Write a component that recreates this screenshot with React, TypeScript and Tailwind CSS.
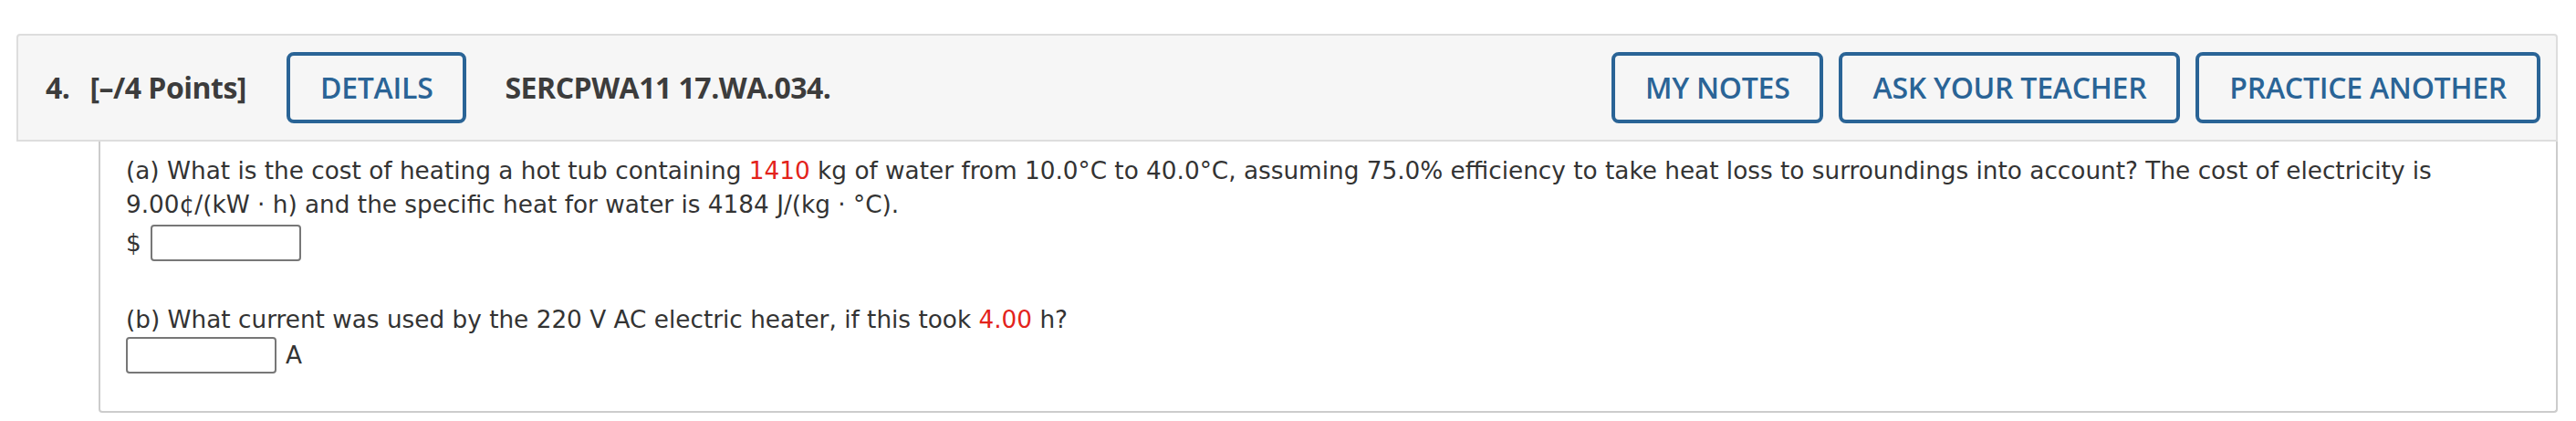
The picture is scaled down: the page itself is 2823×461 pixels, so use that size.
const Btn = ({ label }: { label: string }) => (
  <button className="h-[78px] px-[33px] border-4 border-[#2a6496] rounded-[8px] text-[#2a6496] text-[32px] font-semibold tracking-[-0.25px] leading-none">
    {label}
  </button>
);

const Red = ({ children }: { children: React.ReactNode }) => (
  <span className="text-[#e3231b]">{children}</span>
);

const Box = () => (
  <span className="inline-block w-[165px] h-[40px] border-2 border-[#777] rounded-[4px] bg-white align-middle" />
);

export default function App() {
  return (
    <div className="bg-white w-[2823px] h-[461px] pt-[37px] pl-[18px] pr-[20px]">
      {/* header */}
      <div
        className="flex items-center h-[118px] bg-[#f6f6f6] border-2 border-[#dddddd] rounded-t-[4px] pl-[30px] pr-[17px] text-[#3c3c3c]"
        style={{ fontFamily: '"Open Sans", sans-serif' }}
      >
        <span className="text-[32px] font-bold tracking-[-0.5px]">4.</span>
        <span className="ml-[22px] text-[32px] font-bold tracking-[-0.5px]">[–/4 Points]</span>
        <div className="ml-[44px]">
          <Btn label="DETAILS" />
        </div>
        <span className="ml-[42px] text-[32px] font-bold tracking-[-0.5px]">SERCPWA11 17.WA.034.</span>
        <div className="ml-auto flex gap-[17px]">
          <Btn label="MY NOTES" />
          <Btn label="ASK YOUR TEACHER" />
          <Btn label="PRACTICE ANOTHER" />
        </div>
      </div>
      {/* question body */}
      <div
        className="ml-[90px] h-[297px] border-2 border-t-0 border-[#cccccc] rounded-b-[4px] pl-[28px] pt-[14px] text-[26.3px] leading-[37px] text-[#333]"
        style={{ fontFamily: '"DejaVu Sans", Verdana, sans-serif' }}
      >
        <p>
          (a) What is the cost of heating a hot tub containing <Red>1410</Red> kg of water from 10.0°C to 40.0°C, assuming 75.0% efficiency to take heat loss to surroundings into account? The cost of electricity is
          <br />
          9.00¢/(kW · h) and the specific heat for water is 4184 J/(kg · °C).
        </p>
        <div className="flex items-center gap-[10px] mt-[3px]">
          <span>$</span>
          <Box />
        </div>
        <p className="mt-[46px]">
          (b) What current was used by the 220 V AC electric heater, if this took <Red>4.00</Red> h?
        </p>
        <div className="flex items-center gap-[10px]">
          <Box />
          <span>A</span>
        </div>
      </div>
    </div>
  );
}
